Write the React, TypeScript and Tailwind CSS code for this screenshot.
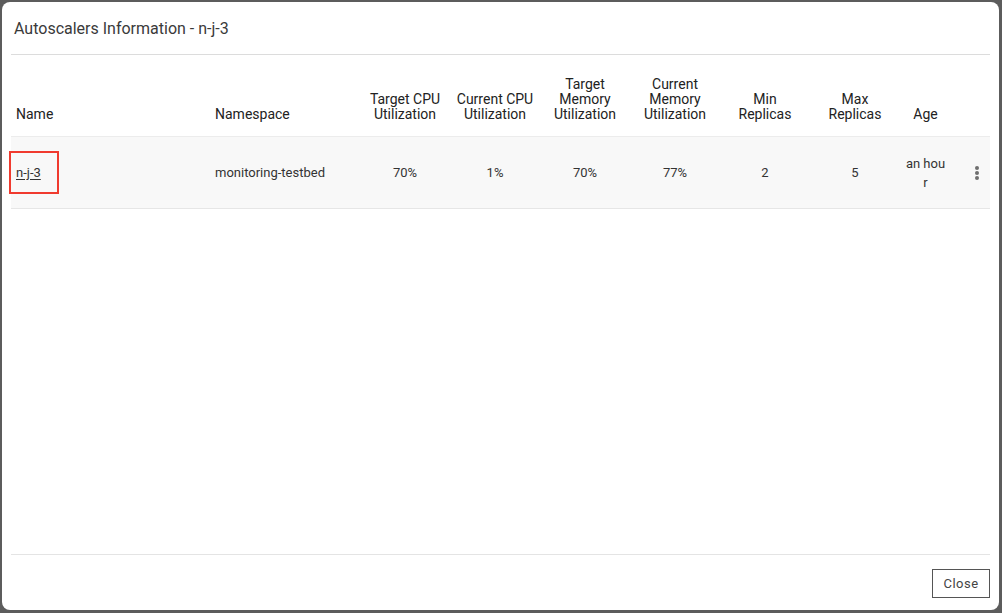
import React from "react";

const cols = "grid grid-cols-[199px_150px_90px_90px_90px_90px_90px_90px_51px_1fr]";

const headers: { label: string[]; align: "left" | "center" }[] = [
  { label: ["Name"], align: "left" },
  { label: ["Namespace"], align: "left" },
  { label: ["Target CPU", "Utilization"], align: "center" },
  { label: ["Current CPU", "Utilization"], align: "center" },
  { label: ["Target", "Memory", "Utilization"], align: "center" },
  { label: ["Current", "Memory", "Utilization"], align: "center" },
  { label: ["Min", "Replicas"], align: "center" },
  { label: ["Max", "Replicas"], align: "center" },
  { label: ["Age"], align: "center" },
  { label: [""], align: "center" },
];

export default function App() {
  return (
    <div
      className="w-[1002px] h-[613px] bg-[#5c5c5c] pt-[2px] pl-[2px] pr-[3px] pb-[3px]"
      style={{ fontFamily: "Roboto, 'Noto Sans', sans-serif" }}
    >
      <div className="w-full h-full bg-white rounded-[8px] flex flex-col text-[#333]">
        <div className="h-[52px] pl-[12px] pt-[16px] text-[16px] leading-[22px] text-[#3a3a3a]">
          Autoscalers Information - n-j-3
        </div>
        <div className="mx-[9px] border-t border-[#dcdcdc]" />
        <div className="flex-1 mx-[9px]">
          <div className={`${cols} h-[82px] border-b border-[#ececec]`}>
            {headers.map((h, i) => (
              <div
                key={i}
                className={`flex flex-col justify-end pb-[14px] px-[5px] text-[14px] leading-[15px] font-normal text-[#222] ${
                  h.align === "center" ? "items-center text-center" : "items-start"
                }`}
              >
                {h.label.map((l, j) => (
                  <span key={j} className="whitespace-nowrap">
                    {l}
                  </span>
                ))}
              </div>
            ))}
          </div>
          <div className={`${cols} h-[72px] bg-[#f8f8f8] border-b border-[#e6e6e6] text-[13px] text-[#333]`}>
            <div className="flex items-center px-[5px]">
              <div className="relative">
                <span className="underline underline-offset-2">n-j-3</span>
                <div className="absolute left-[-7px] top-[-12px] w-[50px] h-[43px] border-2 border-[#f03a2e]" />
              </div>
            </div>
            <div className="flex items-center px-[5px]">monitoring-testbed</div>
            <div className="flex items-center justify-center">70%</div>
            <div className="flex items-center justify-center">1%</div>
            <div className="flex items-center justify-center">70%</div>
            <div className="flex items-center justify-center">77%</div>
            <div className="flex items-center justify-center">2</div>
            <div className="flex items-center justify-center">5</div>
            <div className="flex items-center justify-center px-[5px]">
              <span className="break-all text-center leading-[19px] w-[41px]">an hour</span>
            </div>
            <div className="flex items-center justify-center pl-[12px]">
              <svg width="6" height="16" viewBox="0 0 6 16">
                <circle cx="3" cy="3" r="2" fill="#6f6f6f" />
                <circle cx="3" cy="8" r="2" fill="#6f6f6f" />
                <circle cx="3" cy="13" r="2" fill="#6f6f6f" />
              </svg>
            </div>
          </div>
        </div>
        <div className="mx-[9px] border-t border-[#e4e4e4]" />
        <div className="h-[55px] flex items-start justify-end pr-[9px] pt-[14px]">
          <button className="h-[29px] w-[58px] border border-[#555] text-[13px] font-normal tracking-[0.5px] text-[#444] bg-white">
            Close
          </button>
        </div>
      </div>
    </div>
  );
}
